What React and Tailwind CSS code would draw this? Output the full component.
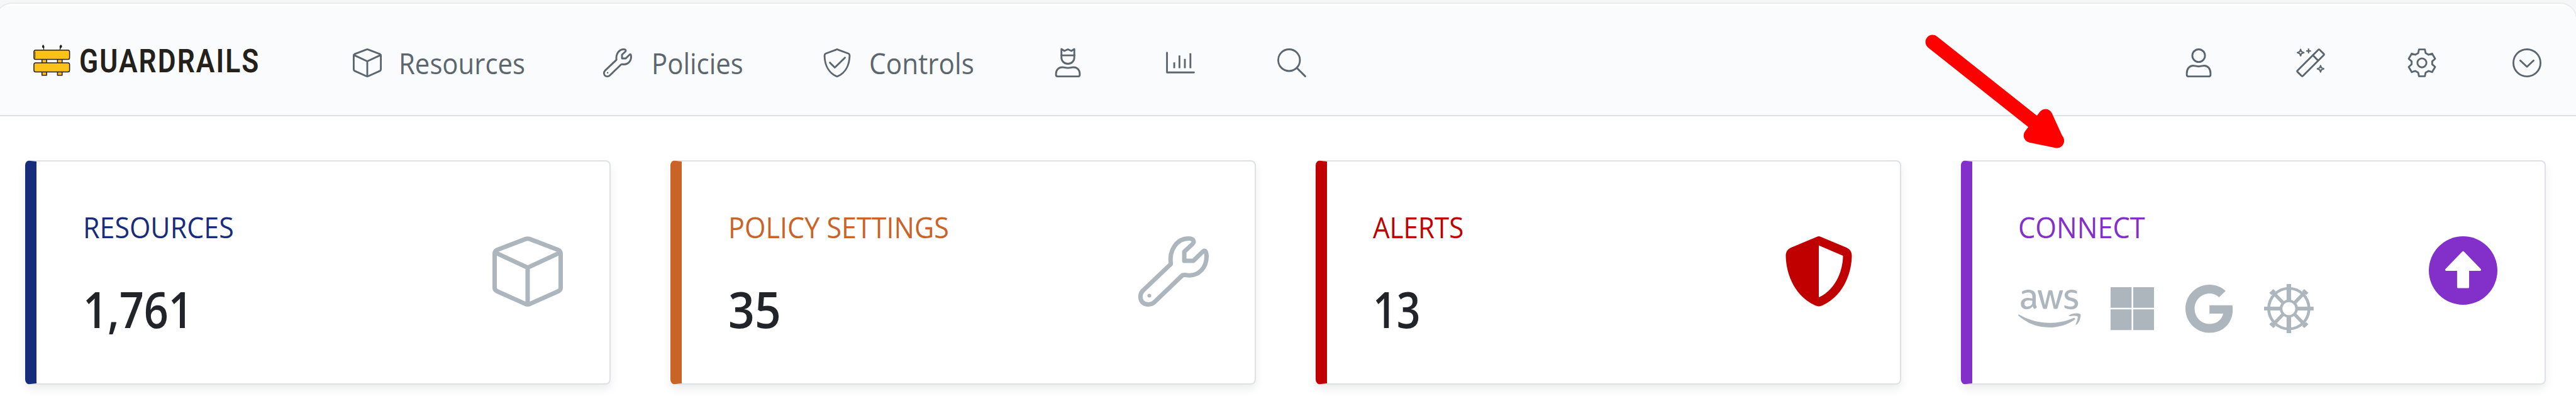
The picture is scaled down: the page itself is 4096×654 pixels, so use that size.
import { FaAws, FaGoogle, FaShieldHalved } from "react-icons/fa6";

function Line({ className = "", children }) {
  return (
    <svg
      viewBox="0 0 512 512"
      fill="none"
      stroke="currentColor"
      strokeWidth="32"
      strokeLinejoin="round"
      strokeLinecap="round"
      className={`shrink-0 overflow-visible ${className}`}
    >
      {children}
    </svg>
  );
}

const Cube = ({ className }) => (
  <Line className={className}>
    <path d="M240 20Q256 14 272 20L476 98Q496 106 496 128V374Q496 392 478 400L272 492Q256 498 240 492L34 400Q16 392 16 374V128Q16 106 36 98Z" />
    <path d="M20 118 256 228 492 118M256 228V492" />
  </Line>
);

const Wrench = ({ className }) => (
  <Line className={className}>
    <path d="M236 202C222 100 280 16 366 16C402 16 410 38 394 56L334 112V178H400L468 112C486 96 494 108 496 146C496 230 436 290 362 284Q336 278 320 284L118 478C94 502 52 502 28 478C10 454 10 418 34 394Z" />
    <circle cx="80" cy="432" r="14" fill="currentColor" stroke="none" />
  </Line>
);

const ShieldCheck = ({ className }) => (
  <Line className={className}>
    <path d="M246 20Q256 14 266 20L458 92Q478 102 478 130C474 300 400 430 276 490Q256 500 236 490C112 430 38 300 34 130Q34 102 54 92Z" />
    <path d="M130 252 216 340 396 164" />
  </Line>
);

const CrownUser = ({ className }) => (
  <Line className={className}>
    <path d="M142 12V160C142 226 192 272 256 272S370 226 370 160V12L318 44 256 16 194 44Z" />
    <path d="M142 124H370" />
    <path d="M160 334C90 334 46 382 46 450V468Q46 496 74 496H438Q466 496 466 468V450C466 382 422 334 352 334C330 334 300 346 256 346S182 334 160 334Z" />
  </Line>
);

const User = ({ className }) => (
  <Line className={className}>
    <circle cx="256" cy="128" r="112" />
    <path d="M160 306C90 306 46 366 46 440V468Q46 496 74 496H438Q466 496 466 468V440C466 366 422 306 352 306C330 306 300 320 256 320S182 306 160 306Z" />
  </Line>
);

const Chart = ({ className }) => (
  <Line className={className}>
    <path d="M18 78V426H494" />
    <path strokeLinecap="butt" d="M146 248V350M238 124V350M334 186V350M432 86V350" />
  </Line>
);

const Search = ({ className }) => (
  <Line className={className}>
    <circle cx="208" cy="208" r="192" />
    <path d="M348 348 494 494" />
  </Line>
);

const Wand = ({ className }) => (
  <Line className={className}>
    <path d="M392 24Q404 12 416 24L488 96Q500 108 488 120L120 488Q108 500 96 488L24 416Q12 404 24 392Z" />
    <path d="M298 124 388 214" />
    <path strokeWidth="24" d="M79 18 95 59 136 75 95 91 79 132 63 91 22 75 63 59Z" />
    <path strokeWidth="26" d="M220 14V76M189 45H251" />
    <path strokeWidth="24" d="M432 305 448 346 489 362 448 378 432 419 416 378 375 362 416 346Z" />
  </Line>
);

const Gear = ({ className }) => (
  <Line className={className}>
    <path d="M204 18H308L322 84 372 112 436 92 490 184 438 230V282L490 328 436 420 372 400 322 428 308 494H204L190 428 140 400 76 420 22 328 74 282V230L22 184 76 92 140 112 190 84Z" />
    <circle cx="256" cy="256" r="80" />
  </Line>
);

const ChevronCircle = ({ className }) => (
  <Line className={className}>
    <circle cx="256" cy="256" r="240" />
    <path d="M138 214 256 326 374 214" />
  </Line>
);

const CircleUp = ({ className }) => (
  <svg viewBox="0 0 512 512" className={`shrink-0 ${className}`}>
    <circle cx="256" cy="256" r="256" fill="currentColor" />
    <path d="M256 120 382 250H293V380H219V250H130Z" fill="#fff" stroke="#fff" strokeWidth="16" strokeLinejoin="round" />
  </svg>
);

const Windows = ({ className }) => (
  <svg viewBox="0 0 212 230" preserveAspectRatio="none" fill="currentColor" className={`shrink-0 ${className}`}>
    <path d="M0 3H102V111H0ZM110 3H212V111H110ZM0 119H102V227H0ZM110 119H212V227H110Z" />
  </svg>
);

const Helm = ({ className }) => (
  <svg viewBox="1260 72 241 257" preserveAspectRatio="none" fill="none" stroke="currentColor" className={`shrink-0 ${className}`}>
    <ellipse cx="1380.500" cy="200.500" rx="98" ry="106" strokeWidth="14" />
    <ellipse cx="1380.500" cy="200.500" rx="38" ry="40.500" strokeWidth="13" />
    <path strokeWidth="22" d="M1380.500 72V162M1380.500 239V329" />
    <path strokeWidth="20" d="M1260 200.500H1342M1419 200.500H1501" />
    <path strokeWidth="17" d="M1299 111 1352 170M1462 111 1409 170M1299 290 1352 231M1462 290 1409 231" />
    <path strokeWidth="16" d="M1291 124 1311 104M1470 124 1450 104M1291 277 1311 297M1470 277 1450 297" />
  </svg>
);

const Logo = () => (
  <svg viewBox="55 52 192 164" className="-mt-[7px] ml-[53.4px] h-[50px] w-[58.6px] shrink-0">
    <g fill="#fcc219" stroke="#24211a" strokeWidth="5">
      <path d="M100 125H124V212H100ZM181 125H205V212H181Z" />
      <rect x="58" y="81" width="186" height="48" rx="9" />
      <rect x="58" y="147" width="186" height="48" rx="9" />
    </g>
    <path d="M64 88V122" stroke="#9a7a1c" strokeWidth="5" />
    <path d="M106 52Q116 62 111 70V79H108L107 71Q94 64 106 52ZM199 52Q211 62 198 71L195 79H192L193 70Q188 60 199 52Z" fill="#24211a" />
  </svg>
);

const NAV_TEXT = "origin-left whitespace-nowrap text-[46px] leading-[46px]";
const NAV_ICON = "size-[46px]";

function Header() {
  return (
    <header className="flex h-[176px] items-center justify-between border-b-2 border-[#dee2e6] bg-[#fafbfd] pt-[7px] text-[#5c666e]">
      <nav className="flex items-center">
        <Logo />
        <span className="-mt-[3px] ml-[14.3px] w-[290px] origin-left scale-x-[0.86] whitespace-nowrap font-[Roboto,sans-serif] text-[51.5px] leading-[52px] font-semibold tracking-[2.4px] text-[#24211a]">
          GUARDRAILS
        </span>
        <Cube className={`ml-[144.3px] ${NAV_ICON}`} />
        <span className={`ml-[27.7px] w-[200px] scale-x-[0.911] ${NAV_TEXT}`}>Resources</span>
        <Wrench className={`ml-[125px] ${NAV_ICON}`} />
        <span className={`ml-[30.7px] w-[150px] scale-x-[0.911] ${NAV_TEXT}`}>Policies</span>
        <ShieldCheck className={`ml-[121.7px] ${NAV_ICON}`} />
        <span className={`ml-[28.8px] w-[170px] scale-x-[0.921] ${NAV_TEXT}`}>Controls</span>
        <CrownUser className={`ml-[122.9px] ${NAV_ICON}`} />
        <Chart className={`ml-[132.2px] ${NAV_ICON}`} />
        <Search className={`ml-[131.7px] ${NAV_ICON}`} />
      </nav>
      <div className="flex items-center pr-[55px]">
        <User className={NAV_ICON} />
        <Wand className={`ml-[132.3px] ${NAV_ICON}`} />
        <Gear className={`ml-[131.6px] ${NAV_ICON}`} />
        <ChevronCircle className={`ml-[120.6px] ${NAV_ICON}`} />
      </div>
    </header>
  );
}

function Card({ accent, title, titleClass, icon, children }) {
  return (
    <section
      className={`flex h-[357px] items-center justify-between rounded-[8px] border-2 border-l-[18px] border-[#dee2e6] bg-white pr-[73px] pl-[73.5px] shadow-[0_7px_14px_rgba(0,0,0,0.075)] ${accent}`}
    >
      <div className="self-start pt-[81.7px]">
        <h2 className={`origin-left text-[46px] leading-[46px] whitespace-nowrap ${titleClass}`}>{title}</h2>
        <div className="mt-[67px] flex h-[80px] items-center text-[79.5px] leading-[80px] font-semibold text-[#212529]">
          {children}
        </div>
      </div>
      <div className="mb-[3px] text-[#adb5bd]">{icon}</div>
    </section>
  );
}

function Arrow() {
  return (
    <svg
      viewBox="3330 40 280 230"
      fill="none"
      stroke="#ff0000"
      strokeWidth="24.700"
      strokeLinecap="round"
      strokeLinejoin="round"
      className="absolute top-[36.6px] left-[3050px] h-[210.7px] w-[256.500px]"
    >
      <path d="M3355 72.500 3571 244" />
      <path d="M3551 201.500 3570.500 244.400 3525.500 235Z" fill="#ff0000" />
    </svg>
  );
}

export default function App() {
  return (
    <div className="relative h-[654px] w-[4096px] overflow-hidden bg-[#f6f6f6] pt-[4px] font-['Open_Sans',sans-serif]">
      <div className="-mr-[2px] -ml-[8px] h-[650px] overflow-hidden rounded-t-[27px] border-2 border-b-0 border-[#ebebeb] bg-white pt-[3px] pl-[6px]">
        <Header />
        <main className="grid grid-cols-4 gap-[95.2px] pt-[69.6px] pr-[47.6px] pl-[40.3px]">
          <Card
            accent="border-l-[#182c7c]"
            title="RESOURCES"
            titleClass="text-[#182c7c] scale-x-[0.934]"
            icon={<Cube className="mr-[1px] size-[112px]" />}
          >
            <span className="origin-left scale-x-[0.86]">1,761</span>
          </Card>
          <Card
            accent="border-l-[#c96328]"
            title="POLICY SETTINGS"
            titleClass="text-[#c96328] scale-x-[0.937]"
            icon={<Wrench className="size-[112px]" />}
          >
            <span className="origin-left scale-x-[0.922]">35</span>
          </Card>
          <Card
            accent="border-l-[#c00000]"
            title="ALERTS"
            titleClass="text-[#c00000] scale-x-[0.915]"
            icon={<FaShieldHalved className="size-[112px] text-[#c00000]" />}
          >
            <span className="origin-left scale-x-[0.83]">13</span>
          </Card>
          <Card
            accent="border-l-[#832fc9]"
            title="CONNECT"
            titleClass="text-[#832fc9] scale-x-[0.943]"
            icon={<CircleUp className="mr-[2px] mb-[2px] size-[109px] text-[#832fc9]" />}
          >
            <div className="flex items-center text-[#adb5bd]">
              <FaAws preserveAspectRatio="none" className="h-[80px] w-[99.4px]" />
              <Windows className="ml-[47.5px] h-[70.2px] w-[69.3px]" />
              <FaGoogle preserveAspectRatio="none" viewBox="0 8 488 496" className="ml-[49.8px] h-[76.6px] w-[75.2px]" />
              <Helm className="ml-[49.4px] h-[78.1px] w-[78.8px]" />
            </div>
          </Card>
        </main>
      </div>
      <Arrow />
    </div>
  );
}
